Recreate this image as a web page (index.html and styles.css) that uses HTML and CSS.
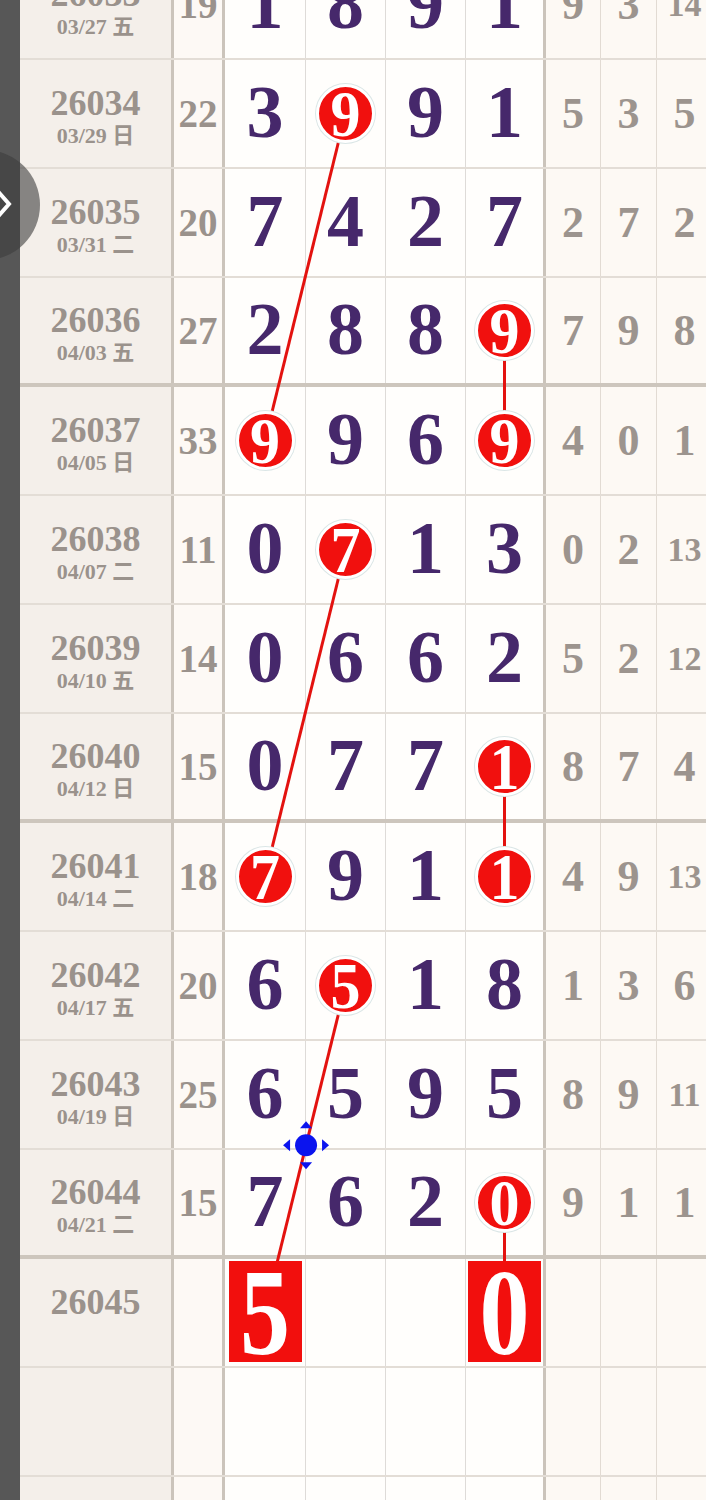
FILE: index.html
```html
<!DOCTYPE html>
<html lang="zh">
<head>
    <meta charset="UTF-8">
    <meta name="viewport" content="width=device-width, initial-scale=1.0">
    <title>走势图</title>
    <link rel="stylesheet" href="styles.css">
</head>
<body>
    <div class="screen">
        <div class="side"></div>
        <div class="chart" id="chart">
            <svg class="links" id="links"></svg>
            <div class="grid" id="grid"></div>
        </div>
        <div class="side-btn">
            <svg width="20" height="40" viewBox="0 0 20 40"><polyline points="0,3 14,19 0,35" fill="none" stroke="#fff" stroke-width="4" stroke-linejoin="miter"/></svg>
        </div>
    </div>

    <script>
        const draws = [
            ["26033", "03/27 五", 19, [1, 8, 9, 1], [9, 3, 14]],
            ["26034", "03/29 日", 22, [3, 9, 9, 1], [5, 3, 5]],
            ["26035", "03/31 二", 20, [7, 4, 2, 7], [2, 7, 2]],
            ["26036", "04/03 五", 27, [2, 8, 8, 9], [7, 9, 8]],
            ["26037", "04/05 日", 33, [9, 9, 6, 9], [4, 0, 1]],
            ["26038", "04/07 二", 11, [0, 7, 1, 3], [0, 2, 13]],
            ["26039", "04/10 五", 14, [0, 6, 6, 2], [5, 2, 12]],
            ["26040", "04/12 日", 15, [0, 7, 7, 1], [8, 7, 4]],
            ["26041", "04/14 二", 18, [7, 9, 1, 1], [4, 9, 13]],
            ["26042", "04/17 五", 20, [6, 5, 1, 8], [1, 3, 6]],
            ["26043", "04/19 日", 25, [6, 5, 9, 5], [8, 9, 11]],
            ["26044", "04/21 二", 15, [7, 6, 2, 0], [9, 1, 1]],
            ["26045", "", "", ["", "", "", ""], ["", "", ""]],
            ["", "", "", ["", "", "", ""], ["", "", ""]],
            ["", "", "", ["", "", "", ""], ["", "", ""]]
        ];

        const hits = {
            "26034": [1], "26036": [3], "26037": [0, 3], "26038": [1],
            "26040": [3], "26041": [0, 3], "26042": [1], "26044": [3]
        };

        const picks = { "26045": { 0: 5, 3: 0 } };

        const links = [
            ["26034", 1, "26037", 0],
            ["26036", 3, "26037", 3],
            ["26038", 1, "26041", 0],
            ["26040", 3, "26041", 3],
            ["26042", 1, "26045", 0],
            ["26044", 3, "26045", 3]
        ];

        function renderGrid() {
            const grid = document.getElementById("grid");
            let html = "";
            draws.forEach((d, i) => {
                const [issue, date, sum, nums, rest] = d;
                const sep = i % 4 === 3 ? " sep" : "";
                html += `<div class="row${sep}">`;
                html += `<div class="cell c-id"><span class="issue">${issue}</span><span class="date">${date}</span></div>`;
                html += `<div class="cell c-sum">${sum}</div>`;
                nums.forEach((n, k) => {
                    let inner = `<span class="num">${n}</span>`;
                    if (hits[issue] && hits[issue].includes(k)) {
                        inner = `<span class="ball" id="m-${issue}-${k}"><span>${n}</span></span>`;
                    }
                    if (picks[issue] && picks[issue][k] !== undefined) {
                        inner = `<span class="box" id="m-${issue}-${k}"><span>${picks[issue][k]}</span></span>`;
                    }
                    html += `<div class="cell c-d${k === 3 ? " last" : ""}">${inner}</div>`;
                });
                rest.forEach(r => {
                    const small = String(r).length > 1 ? " small" : "";
                    html += `<div class="cell c-r${small}">${r}</div>`;
                });
                html += `</div>`;
            });
            grid.innerHTML = html;
        }

        function centerOf(el, base) {
            const r = el.getBoundingClientRect();
            return { x: r.left + r.width / 2 - base.left, y: r.top + r.height / 2 - base.top };
        }

        function renderLinks() {
            const chart = document.getElementById("chart");
            const svg = document.getElementById("links");
            const base = chart.getBoundingClientRect();
            svg.setAttribute("width", base.width);
            svg.setAttribute("height", base.height);
            let out = "";
            let handle = null;
            links.forEach(([a, ak, b, bk], idx) => {
                const p = centerOf(document.getElementById(`m-${a}-${ak}`), base);
                const q = centerOf(document.getElementById(`m-${b}-${bk}`), base);
                out += `<line x1="${p.x}" y1="${p.y}" x2="${q.x}" y2="${q.y}" stroke="#e3120f" stroke-width="3"/>`;
                if (idx === 4) {
                    handle = { x: p.x + (q.x - p.x) * 0.49, y: p.y + (q.y - p.y) * 0.49 };
                }
            });
            if (handle) {
                const { x, y } = handle;
                out += `<g fill="#0b14ee">
                    <circle cx="${x}" cy="${y}" r="11"/>
                    <polygon points="${x - 23},${y} ${x - 16},${y - 6} ${x - 16},${y + 6}"/>
                    <polygon points="${x + 23},${y} ${x + 16},${y - 6} ${x + 16},${y + 6}"/>
                    <polygon points="${x},${y - 24} ${x - 6},${y - 17} ${x + 6},${y - 17}"/>
                    <polygon points="${x},${y + 24} ${x - 6},${y + 17} ${x + 6},${y + 17}"/>
                </g>`;
            }
            svg.innerHTML = out;
        }

        renderGrid();
        renderLinks();
    </script>
</body>
</html>
```

FILE: styles.css
```css
body {
    margin: 0;
    font-family: "Liberation Serif", "Noto Sans CJK SC", serif;
    background-color: #fffefc;
}
.screen {
    position: relative;
    display: flex;
    height: 1500px;
    overflow: hidden;
}
.side {
    width: 20px;
    flex-shrink: 0;
    background: #575757;
}
.chart {
    position: relative;
    flex: 1;
    overflow: hidden;
}
.links {
    position: absolute;
    left: 0;
    top: 0;
}
.grid {
    margin-top: -49px;
}
.row {
    display: flex;
    height: 109px;
    box-sizing: border-box;
    border-bottom: 2px solid #e3ddd6;
}
.row.sep {
    border-bottom: 4px solid #cdc6bd;
}
.cell {
    display: flex;
    align-items: center;
    justify-content: center;
    flex-shrink: 0;
    box-sizing: border-box;
    font-weight: bold;
    line-height: 1;
}
.c-id {
    width: 154px;
    flex-direction: column;
    padding-top: 5px;
    background: #f4efea;
    border-right: 3px solid #cbc4bb;
    color: #9a928c;
}
.issue {
    font-size: 36px;
    line-height: 38px;
}
.date {
    font-size: 22px;
    line-height: 26px;
    min-height: 26px;
    margin-top: 1px;
}
.c-sum {
    width: 51px;
    background: #fdf9f5;
    border-right: 3px solid #cbc4bb;
    color: #9a928c;
    font-size: 39px;
}
.c-d {
    width: 80px;
    background: #fffefc;
    border-right: 1px solid #dedbd8;
}
.c-d:nth-child(3) {
    width: 81px;
}
.c-d.last {
    border-right: 3px solid #cbc4bb;
}
.num {
    color: #46286b;
    font-size: 74px;
    margin-top: -4px;
}
.ball {
    position: relative;
    width: 53px;
    height: 53px;
    border-radius: 50%;
    border: 3px solid #fff;
    box-shadow: 0 0 0 1px #dbe6e6;
    background: #f1100e;
    color: #fff;
    font-size: 60px;
    display: flex;
    align-items: center;
    justify-content: center;
}
.ball span {
    margin-top: 1px;
    transform: scaleY(1.08);
}
.box {
    position: relative;
    align-self: flex-start;
    margin-top: 2px;
    width: 73px;
    height: 101px;
    background: #f20f0d;
    color: #fff;
    font-size: 100px;
    display: flex;
    align-items: center;
    justify-content: center;
}
.box span {
    transform: scaleY(1.22);
    margin-top: 4px;
}
.c-r {
    width: 56px;
    background: #fdf9f4;
    border-right: 1px solid #e2dbd3;
    color: #9c948e;
    font-size: 44px;
}
.c-r:nth-child(7) {
    width: 55px;
}
.c-r.small {
    font-size: 34px;
}
.side-btn {
    position: absolute;
    left: -70px;
    top: 150px;
    width: 110px;
    height: 110px;
    border-radius: 50%;
    background: rgba(60, 60, 60, 0.6);
    display: flex;
    align-items: center;
    justify-content: flex-end;
    padding-right: 40px;
    box-sizing: border-box;
}
.side-btn svg {
    margin-right: -15px;
}
```
